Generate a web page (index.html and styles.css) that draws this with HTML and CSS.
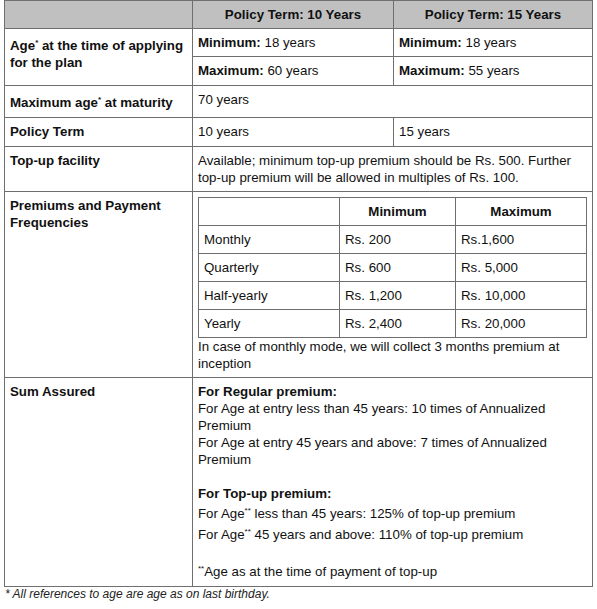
FILE: index.html
```html
<!DOCTYPE html>
<html>
<head>
<meta charset="utf-8">
<link rel="stylesheet" href="styles.css">
</head>
<body>
<div class="wrap">
<table class="plan">
  <colgroup><col class="c1"><col class="c2"><col class="c3"></colgroup>
  <thead>
    <tr><th></th><th>Policy Term: 10 Years</th><th>Policy Term: 15 Years</th></tr>
  </thead>
  <tbody>
    <tr>
      <td class="label" rowspan="2">Age<sup>*</sup> at the time of applying for the plan</td>
      <td><b>Minimum:</b> 18 years</td>
      <td><b>Minimum:</b> 18 years</td>
    </tr>
    <tr class="tall">
      <td><b>Maximum:</b> 60 years</td>
      <td><b>Maximum:</b> 55 years</td>
    </tr>
    <tr class="tall">
      <td class="label">Maximum age<sup>*</sup> at maturity</td>
      <td colspan="2">70 years</td>
    </tr>
    <tr class="tall">
      <td class="label">Policy Term</td>
      <td>10 years</td>
      <td>15 years</td>
    </tr>
    <tr>
      <td class="label">Top-up facility</td>
      <td colspan="2">Available; minimum top-up premium should be Rs. 500. Further top-up premium will be allowed in multiples of Rs. 100.</td>
    </tr>
    <tr>
      <td class="label">Premiums and Payment Frequencies</td>
      <td colspan="2">
        <table class="freq">
          <colgroup><col class="f1"><col class="f2"><col class="f3"></colgroup>
          <thead>
            <tr><th></th><th>Minimum</th><th>Maximum</th></tr>
          </thead>
          <tbody>
            <tr><td>Monthly</td><td>Rs. 200</td><td>Rs.1,600</td></tr>
            <tr><td>Quarterly</td><td>Rs. 600</td><td>Rs. 5,000</td></tr>
            <tr><td>Half-yearly</td><td>Rs. 1,200</td><td>Rs. 10,000</td></tr>
            <tr><td>Yearly</td><td>Rs. 2,400</td><td>Rs. 20,000</td></tr>
          </tbody>
        </table>
        <p class="note">In case of monthly mode, we will collect 3 months premium at inception</p>
      </td>
    </tr>
    <tr>
      <td class="label">Sum Assured</td>
      <td colspan="2">
        <p class="line"><b>For Regular premium:</b></p>
        <p class="line">For Age at entry less than 45 years: 10 times of Annualized Premium</p>
        <p class="line">For Age at entry 45 years and above: 7 times of Annualized Premium</p>
        <p class="line gap"><b>For Top-up premium:</b></p>
        <p class="line">For Age<sup>**</sup> less than 45 years: 125% of top-up premium</p>
        <p class="line">For Age<sup>**</sup> 45 years and above: 110% of top-up premium</p>
        <p class="line gap"><sup>**</sup>Age as at the time of payment of top-up</p>
      </td>
    </tr>
  </tbody>
</table>
<p class="foot">* All references to age are age as on last birthday.</p>
</div>
</body>
</html>
```

FILE: styles.css
```css
html, body {
  margin: 0;
  padding: 0;
  background: #ffffff;
}

.wrap {
  padding: 0 4px;
  font-family: "Liberation Sans", Arial, sans-serif;
  color: #111111;
}

table {
  border-collapse: collapse;
  table-layout: fixed;
}

.plan {
  width: 588px;
}

.c1 { width: 188px; }
.c2 { width: 201px; }
.c3 { width: 199px; }

.plan > thead > tr > th,
.plan > tbody > tr > td {
  border: 1px solid #6f6f6f;
  padding: 5px 5px;
  font-size: 13.3px;
  line-height: 17px;
  vertical-align: top;
  text-align: left;
}

.plan > tbody > tr.tall > td {
  padding-bottom: 6px;
}

.plan > thead > tr > th {
  background: #c0c0c0;
  text-align: center;
  font-weight: bold;
}

.label {
  font-weight: bold;
}

sup {
  font-size: 8px;
}

.freq {
  width: 100%;
}

.f1 { width: 141px; }
.f2 { width: 116px; }
.f3 { width: 131px; }

.freq th,
.freq td {
  border: 1px solid #6f6f6f;
  padding: 5px 5px;
  font-size: 13.3px;
  line-height: 17px;
  text-align: left;
  vertical-align: top;
}

.freq th {
  text-align: center;
  font-weight: bold;
}

.note {
  margin: 0;
}

.line {
  margin: 0;
}

.gap {
  margin-top: 17px;
}

.foot {
  margin: 0;
  font-size: 12px;
  line-height: 14px;
  font-style: italic;
  color: #222222;
  padding-left: 1px;
}
```
